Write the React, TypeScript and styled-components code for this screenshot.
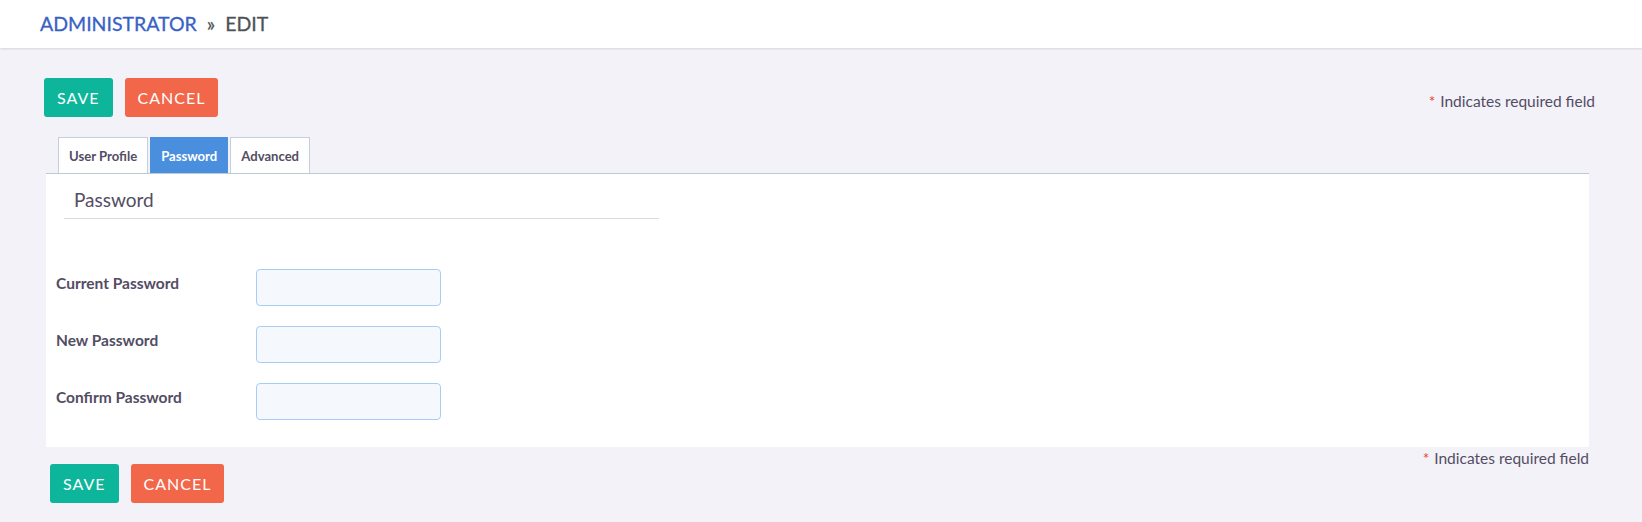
import React from 'react';
import styled, { createGlobalStyle } from 'styled-components';

const GlobalStyle = createGlobalStyle`
  html, body {
    margin: 0;
    padding: 0;
    background: #f3f2f8;
    font-family: Lato, "Open Sans", sans-serif;
    color: #534d64;
  }
  * {
    box-sizing: border-box;
  }
`;

const Header = styled.header`
  height: 48px;
  background: #fff;
  display: flex;
  align-items: center;
  padding-left: 40px;
  box-shadow: 0 1px 2px rgba(0, 0, 0, 0.12);
  font-size: 19.5px;
  line-height: 48px;
  text-transform: uppercase;
  -webkit-text-stroke: 0.3px currentColor;
`;

const Crumb = styled.a`
  color: #3762c4;
  text-decoration: none;
`;

const Separator = styled.span`
  color: #4d5257;
  margin: 0 10px 0 10px;
`;

const Title = styled.span`
  color: #4d5257;
`;

const Content = styled.main`
  padding: 30px 47px 40px 44px;
`;

const ActionBar = styled.div`
  display: flex;
  justify-content: space-between;
  align-items: flex-start;
`;

const ButtonGroup = styled.div<{ $offset?: number }>`
  display: flex;
  gap: 12px;
  margin-top: ${({ $offset }) => $offset ?? 0}px;
`;

const Button = styled.button<{ $variant: 'save' | 'cancel' }>`
  height: 39px;
  padding: 0 13px;
  border: none;
  border-radius: 3px;
  background: ${({ $variant }) => ($variant === 'save' ? '#0db59b' : '#f2674a')};
  color: #fff;
  font-family: Lato, sans-serif;
  font-size: 16px;
  letter-spacing: 1px;
  text-transform: uppercase;
  cursor: pointer;
`;

const Required = styled.div<{ $top: number }>`
  font-size: 15.5px;
  line-height: 16px;
  margin-top: ${({ $top }) => $top}px;
  text-align: right;
  color: #534d64;
`;

const Star = styled.span`
  color: #f0402f;
  margin-right: 5px;
`;

const EditView = styled.section`
  margin: 20px 6px 0 2px;
`;

const TabList = styled.div`
  display: flex;
  gap: 2px;
  padding-left: 12px;
  border-bottom: 1px solid #b9cad8;
`;

const Tab = styled.button<{ $active?: boolean }>`
  height: 36px;
  padding: 0 10px;
  border: 1px solid ${({ $active }) => ($active ? '#4a90e2' : '#c3cfdb')};
  border-bottom: none;
  background: ${({ $active }) => ($active ? '#4a8fdd' : '#fff')};
  color: ${({ $active }) => ($active ? '#fff' : '#534d64')};
  font-family: Lato, sans-serif;
  font-size: 13.1px;
  font-weight: 700;
  cursor: pointer;
`;

const Panel = styled.div`
  background: #fff;
  padding: 15px 0 27px 0;
`;

const PanelHeading = styled.h2`
  margin: 0 0 50px 18px;
  width: 595px;
  padding: 0 0 7px 10px;
  border-bottom: 1px solid #dcdcdc;
  font-size: 19px;
  font-weight: 400;
  line-height: 22px;
`;

const FieldList = styled.div`
  display: flex;
  flex-direction: column;
  gap: 20px;
`;

const FieldRow = styled.div`
  display: flex;
  align-items: flex-start;
`;

const Label = styled.label`
  width: 210px;
  padding: 4px 0 0 10px;
  font-size: 15.5px;
  font-weight: 700;
  line-height: 20px;
`;

const Input = styled.input`
  width: 185px;
  height: 37px;
  border: 1px solid #a8cdf5;
  border-radius: 4px;
  background: #f5f8fd;
  outline: none;
`;

const BottomArea = styled.div`
  margin: 3px 6px 0 6px;
`;

const fields = ['Current Password', 'New Password', 'Confirm Password'];

export default function App() {
  return (
    <>
      <GlobalStyle />
      <Header>
        <Crumb href="#">Administrator</Crumb>
        <Separator>»</Separator>
        <Title>Edit</Title>
      </Header>
      <Content>
        <ActionBar>
          <ButtonGroup>
            <Button $variant="save">Save</Button>
            <Button $variant="cancel">Cancel</Button>
          </ButtonGroup>
          <Required $top={15}>
            <Star>*</Star>Indicates required field
          </Required>
        </ActionBar>
        <EditView>
          <TabList>
            <Tab>User Profile</Tab>
            <Tab $active>Password</Tab>
            <Tab>Advanced</Tab>
          </TabList>
          <Panel>
            <PanelHeading>Password</PanelHeading>
            <FieldList>
              {fields.map(name => (
                <FieldRow key={name}>
                  <Label>{name}</Label>
                  <Input type="password" />
                </FieldRow>
              ))}
            </FieldList>
          </Panel>
        </EditView>
        <BottomArea>
          <Required $top={0}>
            <Star>*</Star>Indicates required field
          </Required>
          <ButtonGroup $offset={-2}>
            <Button $variant="save">Save</Button>
            <Button $variant="cancel">Cancel</Button>
          </ButtonGroup>
        </BottomArea>
      </Content>
    </>
  );
}
